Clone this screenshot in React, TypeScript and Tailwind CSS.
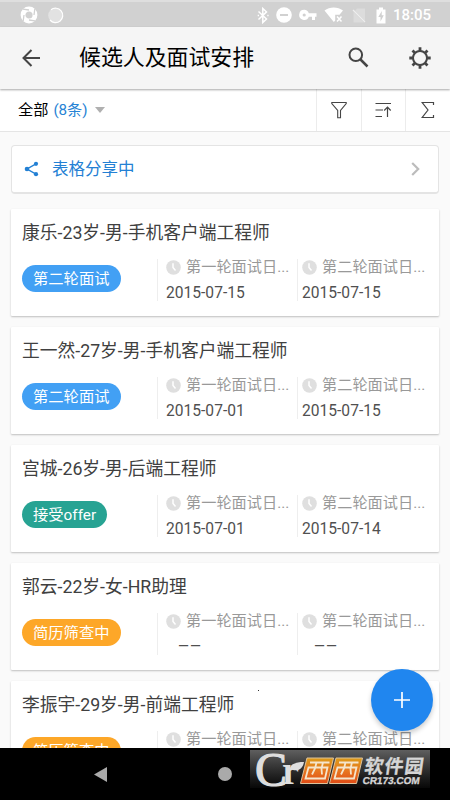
interface Candidate {
  title: string;
  status: string;
  tone: 'blue' | 'teal' | 'amber';
  first?: string;
  second?: string;
}

const CANDIDATES: Candidate[] = [
  { title: '康乐-23岁-男-手机客户端工程师', status: '第二轮面试', tone: 'blue', first: '2015-07-15', second: '2015-07-15' },
  { title: '王一然-27岁-男-手机客户端工程师', status: '第二轮面试', tone: 'blue', first: '2015-07-01', second: '2015-07-15' },
  { title: '宫城-26岁-男-后端工程师', status: '接受offer', tone: 'teal', first: '2015-07-01', second: '2015-07-14' },
  { title: '郭云-22岁-女-HR助理', status: '简历筛查中', tone: 'amber' },
  { title: '李振宇-29岁-男-前端工程师', status: '简历筛查中', tone: 'amber' },
];

const TONES = {
  blue: 'bg-[#42a0f4]',
  teal: 'bg-[#27a393]',
  amber: 'bg-[#fda728]',
};

function StatusBar() {
  return (
    <div className="flex h-[27px] shrink-0 items-center border-t-2 border-[#dedede] bg-[#d1d1d1] pl-5 pt-px text-white">
      <svg width="18" height="18" viewBox="0 0 18 18">
        <circle cx="9" cy="9" r="6" fill="none" stroke="currentColor" strokeWidth="4.8" />
        <path d="M9 4 3 3.2M14 9l.8-6M9 14l6 .8M4 9l-.8 6" stroke="#d1d1d1" strokeWidth="1.3" />
      </svg>
      <svg className="ml-[9px]" width="17" height="17" viewBox="0 0 17 17">
        <circle cx="8.5" cy="8.5" r="7.3" fill="#e2e2e2" />
        <path d="M4 2.8A7.2 7.2 0 1 1 3 13" fill="none" stroke="#fff" strokeWidth="1.2" />
      </svg>
      <svg className="ml-[193px]" width="12" height="17" viewBox="0 0 12 17" fill="none" stroke="currentColor" strokeWidth="1.5">
        <path d="M1.5 4.5 9.5 12 5.8 15.5v-14l3.7 3.4-8 7.6" />
        <path d="M.7 8.5h1.3M10.3 8.5h1.3" />
      </svg>
      <svg className="ml-[7px]" width="16" height="16" viewBox="0 0 16 16" fill="currentColor">
        <circle cx="8" cy="8" r="7.8" />
        <path d="M4 7h8v2H4z" fill="#d1d1d1" />
      </svg>
      <svg className="ml-[7px]" width="18" height="12" viewBox="0 0 18 12" fill="currentColor" fillRule="evenodd">
        <path d="M5.2.8a5 5 0 1 0 4.6 6.9H13V11h3V7.7h1.5V4.3H9.8A5 5 0 0 0 5.2.8Zm0 3.6a1.6 1.6 0 1 1 0 3.2 1.6 1.6 0 0 1 0-3.2Z" />
      </svg>
      <svg className="ml-[7px]" width="20" height="16" viewBox="0 0 20 16">
        <path d="M.5 3.5C5.8-.5 13.5-.5 19 3.5l-3.5 4.3h-4.3v5.7L9.8 15Z" fill="currentColor" />
        <path d="m13 9.5 4.5 5M17.5 9.5l-4.5 5" stroke="currentColor" strokeWidth="1.5" />
      </svg>
      <svg className="ml-[8px]" width="14" height="15" viewBox="0 0 14 15">
        <path d="M5 .5h8V13L3 3Z" fill="#dcdcdc" />
        <path d="M1.5 4v10.5H12Z" fill="#dcdcdc" />
        <path d="m1 2 12 12" stroke="#eee" strokeWidth="1.3" />
      </svg>
      <svg className="ml-[10px]" width="10" height="17" viewBox="0 0 10 17">
        <path d="M3 .5h4v2h2.5V16.5H.5v-14H3Z" fill="currentColor" />
        <path d="M5.8 4 2.3 10h2.2v4.5l3.3-6.3H5.7Z" fill="#d1d1d1" />
      </svg>
      <span className="ml-[7px] text-[15px] font-medium leading-none">18:05</span>
    </div>
  );
}

function Toolbar() {
  return (
    <header className="z-10 flex h-[62px] shrink-0 items-center bg-[#f5f5f5] pl-[22px] text-[#454545] shadow-[0_1px_2px_rgba(0,0,0,0.35)]">
      <svg width="18" height="18" viewBox="0 0 18 18" fill="none" stroke="currentColor" strokeWidth="2">
        <path d="M9.5 1 1.5 9l8 8M1.5 9H18" />
      </svg>
      <h1 className="ml-[39px] w-[177px] whitespace-nowrap text-[21.9px] leading-none text-black">候选人及面试安排</h1>
      <svg className="-mt-px ml-[92px]" width="21" height="21" viewBox="0 0 21 21" fill="none" stroke="currentColor" strokeWidth="2">
        <circle cx="7.8" cy="7.8" r="6.3" />
        <path d="m12.5 12.5 7 7" strokeWidth="2.5" />
      </svg>
      <svg className="ml-[40px]" width="22" height="22" viewBox="0 0 22 22" fill="none" stroke="currentColor">
        <circle cx="11" cy="11" r="7" strokeWidth="2" />
        <path
          d="M11 .3V4M11 18v3.7M.3 11H4M18 11h3.7M3.5 3.5 6 6M16 16l2.5 2.5M18.5 3.5 16 6M6 16l-2.5 2.5"
          strokeWidth="2.8"
        />
      </svg>
    </header>
  );
}

function FilterBar() {
  return (
    <div className="flex h-[43px] shrink-0 items-center border-b border-[#e5e5e5] bg-white pl-[18px] text-[#454545]">
      <span className="text-[15.2px] text-black">全部</span>
      <span className="ml-[5px] text-[15.2px] text-[#2883d5]">(8条)</span>
      <span className="ml-[7px] border-x-[5.5px] border-t-[6px] border-x-transparent border-t-[#b0b0b0]" />
      <div className="ml-auto flex h-full">
        <div className="flex w-[45px] items-center justify-center border-l border-[#ececec]">
          <svg width="16" height="18" viewBox="0 0 16 18" fill="none" stroke="currentColor" strokeWidth="1.1">
            <path d="M.8 1.5h14.4v1L9.5 9.5v7.3H6.7V9.5L.8 2.5Z" />
          </svg>
        </div>
        <div className="flex w-[44px] items-center justify-center border-l border-[#ececec]">
          <svg width="17" height="17" viewBox="0 0 17 17" fill="none" stroke="currentColor" strokeWidth="1.2">
            <path d="M.5 1.5h15.5M.5 8h7.5M.5 14.5h6.5M12.5 15V5.5M9.2 8.5l3.3-3.3 3.2 3.3" />
          </svg>
        </div>
        <div className="flex w-[45px] items-center justify-center border-l border-[#ececec]">
          <svg width="14" height="18" viewBox="0 0 14 18" fill="none" stroke="currentColor" strokeWidth="1.2">
            <path d="M12.5 4V1.5H1.2L7 9l-5.8 7.5h11.3V14" />
          </svg>
        </div>
      </div>
    </div>
  );
}

function ShareCard() {
  return (
    <div className="flex h-[49px] shrink-0 items-center rounded-[4px] border border-b-2 border-[#e4e4e4] bg-white pl-[12px] pr-[18px] text-[#2380d4]">
      <svg width="16" height="16" viewBox="0 0 16 16" fill="currentColor">
        <path d="M12 2.8 3 8l9 5.2" fill="none" stroke="currentColor" strokeWidth="1.4" />
        <circle cx="12" cy="2.8" r="2.1" />
        <circle cx="3" cy="8" r="2.3" />
        <circle cx="12" cy="13.2" r="2.1" />
      </svg>
      <span className="ml-[12px] pt-[2px] text-[16.5px]">表格分享中</span>
      <svg className="ml-auto" width="9" height="14" viewBox="0 0 9 14" fill="none" stroke="#bcbcbc" strokeWidth="2.2">
        <path d="m1.2 1 6 6-6 6" />
      </svg>
    </div>
  );
}

function DateField({ label, value }: { label: string; value?: string }) {
  return (
    <div className="h-[42px] whitespace-nowrap border-l border-[#eeeeee] text-[15.2px]">
      <div className="flex h-[17px] items-center text-[#999]">
        <svg className="shrink-0" width="15" height="15" viewBox="0 0 15 15">
          <circle cx="7.5" cy="7.5" r="7.3" fill="#dfdfdf" />
          <path d="M7 3.3V7.5l2.5 3" fill="none" stroke="#fff" strokeWidth="1.5" />
        </svg>
        <span className="ml-[5px]">{label}</span>
      </div>
      {value ? (
        <div className="mt-[8px] flex h-[19px] items-center text-[15.6px] text-[#505050]">{value}</div>
      ) : (
        <div className="mt-[7px] flex h-[18px] items-center pl-[12px] text-[14px] leading-[18px] text-[#505050]">
          <span>—</span>
          <span className="ml-px">—</span>
        </div>
      )}
    </div>
  );
}

function CandidateCard({ candidate }: { candidate: Candidate }) {
  return (
    <article className="h-[107px] shrink-0 rounded-[1px] bg-white px-[11px] pt-[12px] shadow-[0_1px_2px_rgba(0,0,0,0.24)]">
      <h2 className="whitespace-nowrap text-[17.75px] leading-[24px] text-[#404040]">{candidate.title}</h2>
      <div className="mt-[14px] grid grid-cols-[135px_140px_1fr]">
        <div className="pt-[6px]">
          <span className={`inline-flex h-[27px] items-center rounded-full px-[11px] pt-px text-[15.3px] text-white ${TONES[candidate.tone]}`}>
            {candidate.status}
          </span>
        </div>
        <div className="[&>div]:pl-[8px]">
          <DateField label="第一轮面试日..." value={candidate.first} />
        </div>
        <div className="[&>div]:pl-[4px]">
          <DateField label="第二轮面试日..." value={candidate.second} />
        </div>
      </div>
    </article>
  );
}

function SiteMark() {
  return (
    <div className="absolute left-[250px] top-[2px] flex h-[38px] w-[180px] items-center bg-linear-to-b from-[#5f5f5f] to-[#080808]">
      <svg width="180" height="38" viewBox="0 0 180 38">
        <defs>
          <linearGradient id="orange" x2="0" y2="1">
            <stop stopColor="#dc9b19" />
            <stop offset=".5" stopColor="#e87720" />
            <stop offset="1" stopColor="#df4b16" />
          </linearGradient>
        </defs>
        <g fill="#dedede" fontFamily="Liberation Serif, serif">
          <text x="5" y="36" stroke="#dedede" strokeWidth="1.2" fontSize="48" textLength="32" lengthAdjust="spacingAndGlyphs">C</text>
          <text x="32" y="34" fontSize="43" fontWeight="700" textLength="17" lengthAdjust="spacingAndGlyphs">r</text>
        </g>
        <path d="M40 19c0-5 6-7 14-7-1 6-5 9.500-11 8Z" fill="#dedede" />
        {[0, 29].map((x) => (
          <g key={x} transform={`translate(${x} 0)`}>
            <path d="M57 8h26.5l-6 25.5H50.5Z" fill="url(#orange)" stroke="#dcc39c" />
            <path
              d="M60 12.5h19.5M58.5 17.5h19l-2.5 11H55.5ZM66.5 12.5l-1.5 6-3 6M73 12.5l-1.5 6 .5 6"
              fill="none"
              stroke="#f5e5cc"
              strokeWidth="1.8"
            />
          </g>
        ))}
        <g fill="#d5d5d5" stroke="#d5d5d5" strokeWidth=".3" fontWeight="700">
          <text x="117" y="23" transform="skewX(-8)" fontFamily="Noto Sans CJK SC, sans-serif" fontSize="19" textLength="59">软件园</text>
          <text x="117" y="34" transform="skewX(-8)" fontFamily="Liberation Sans, sans-serif" fontSize="10" textLength="57" lengthAdjust="spacingAndGlyphs">CR173.COM</text>
        </g>
      </svg>
    </div>
  );
}

function NavigationBar() {
  return (
    <nav className="relative h-[52px] shrink-0 bg-black">
      <div className="flex h-full items-center pl-[94px]">
        <svg width="13" height="15" viewBox="0 0 13 15">
          <path d="M13 0v15L0 7.5Z" fill="#aaa" />
        </svg>
        <span className="ml-[111px] size-[14px] rounded-full bg-[#aaa]" />
      </div>
      <SiteMark />
    </nav>
  );
}

export default function App() {
  return (
    <div className="relative flex h-[800px] w-[450px] flex-col overflow-hidden bg-[#fafafa] font-[Roboto,'Noto_Sans_CJK_SC',sans-serif]">
      <StatusBar />
      <Toolbar />
      <FilterBar />
      <main className="flex min-h-0 flex-1 flex-col overflow-hidden px-[11px] pt-[13px]">
        <ShareCard />
        <div className="mt-[15px] flex flex-col gap-[11px]">
          {CANDIDATES.map((candidate) => (
            <CandidateCard key={candidate.title} candidate={candidate} />
          ))}
        </div>
      </main>
      <NavigationBar />
      <span className="absolute left-[258px] top-[690px] size-px bg-[#333]" />
      <button className="absolute left-[371px] top-[669px] flex size-[62px] items-center justify-center rounded-full bg-[#2086ef] shadow-[0_3px_5px_rgba(0,0,0,0.2)]" aria-label="添加">
        <svg width="16" height="16" viewBox="0 0 16 16" stroke="white" strokeWidth="1.7">
          <path d="M8 0v16M0 8h16" />
        </svg>
      </button>
    </div>
  );
}
